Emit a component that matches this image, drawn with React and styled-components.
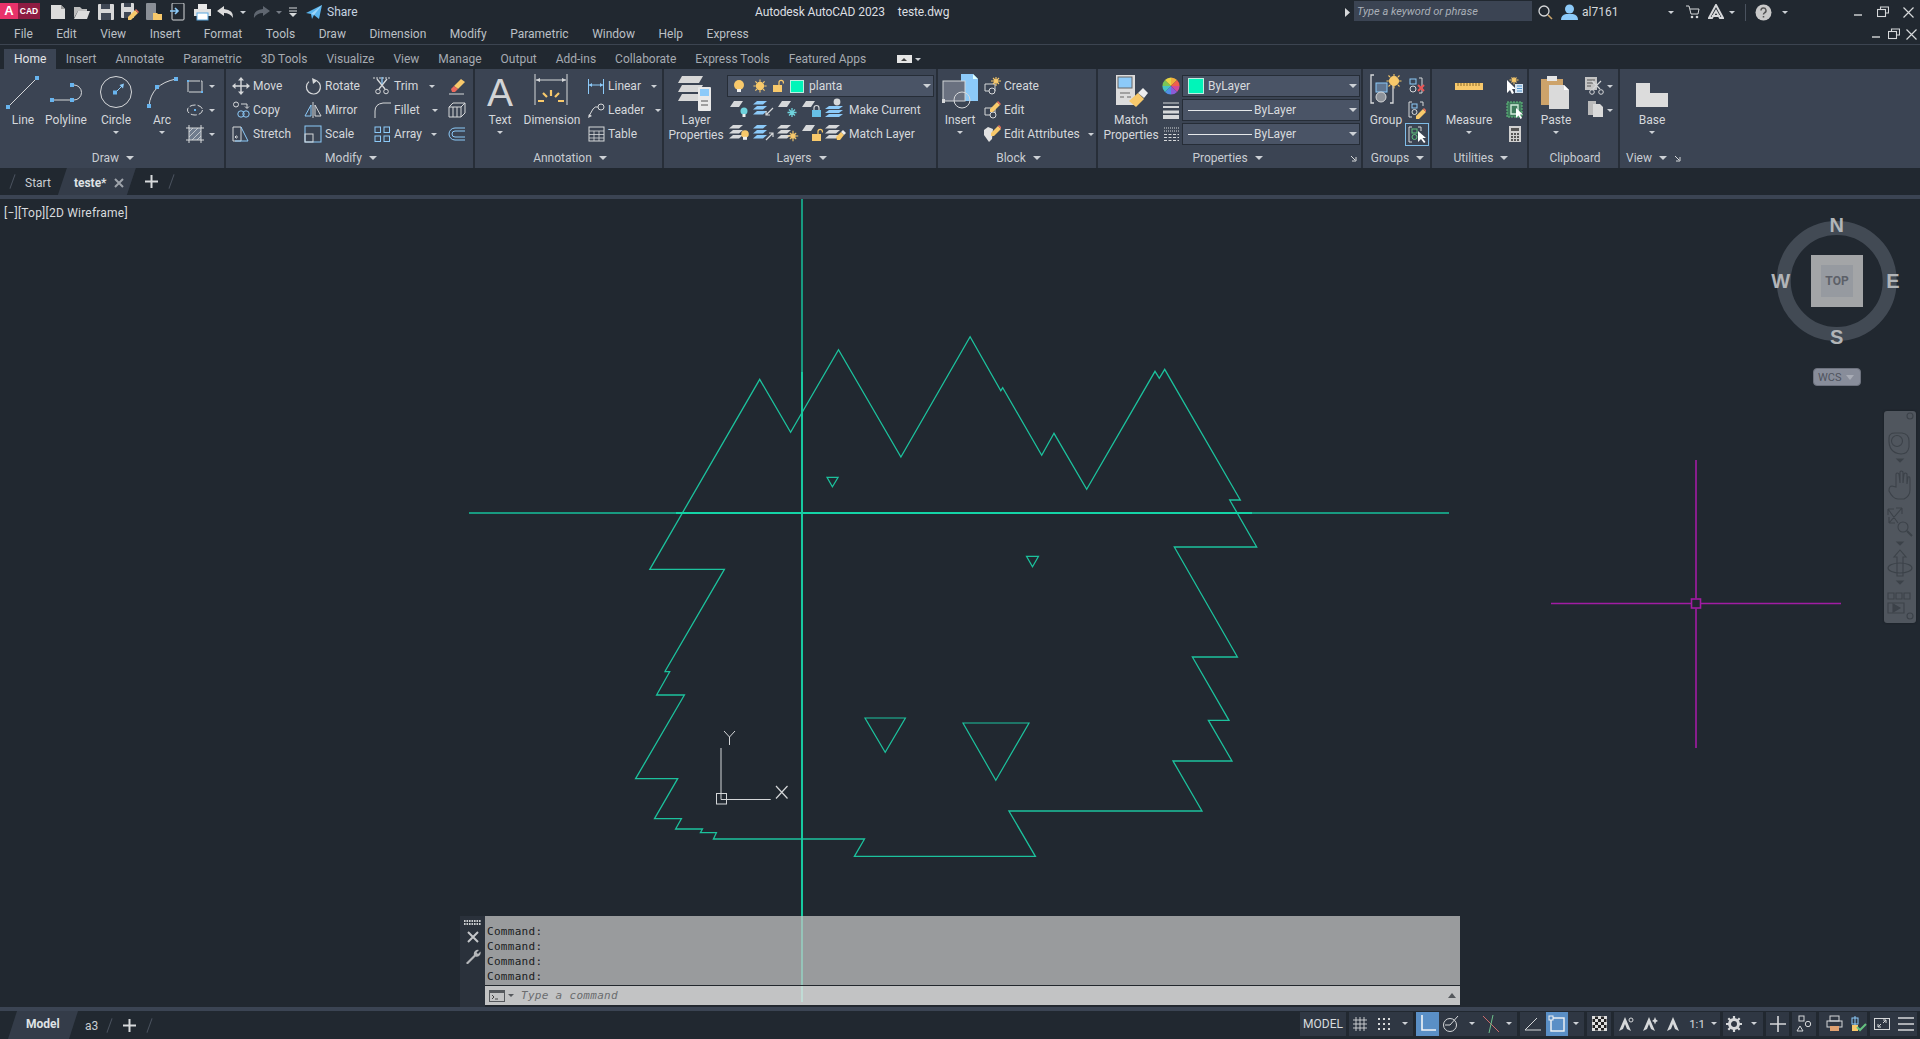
import React from 'react';
import styled, { createGlobalStyle } from 'styled-components';

const Global = createGlobalStyle`
  html, body { margin: 0; padding: 0; height: 100%; background: #212830; overflow: hidden; }
  #root { height: 100%; }
  * { box-sizing: border-box; }
`;
const BG = '#212830', PANEL = '#3b4453', GR = '#d6d8da', BL = '#8ccaf9', YE = '#f8c96b', LN = '#1cc29d';

const Page = styled.div`
  width: 1920px; height: 1039px; display: flex; flex-direction: column; background: ${BG};
  font-family: Roboto, "Open Sans", sans-serif; font-size: 12px; color: #d5d8dc; overflow: hidden;
`;
const Svg = styled.svg`display: block; flex: none;`;
const S = ({ w, h = w, children }) => <Svg width={w} height={h} viewBox={`0 0 ${w} ${h}`} fill="none">{children}</Svg>;
const Pt = ({ x, y, s = 4, c = '#68b4ee' }) => <rect x={x - s / 2} y={y - s / 2} width={s} height={s} fill={c} />;

const Caret = styled.span`
  display: inline-block; flex: none; width: 0; height: 0;
  margin-left: ${p => p.$ml || 0}px;
  border-left: ${p => p.$s || 3}px solid transparent; border-right: ${p => p.$s || 3}px solid transparent;
  border-top: ${p => (p.$s || 3)}px solid ${p => p.$c || '#cdd1d6'};
`;

/* ---------- title bar ---------- */
const TitleBar = styled.div`height: 24px; flex: none; display: flex; align-items: center;`;
const LeftBlock = styled.div`width: 755px; flex: none; display: flex; align-items: center; height: 100%;`;
const Logo = styled.div`width: 40px; height: 16px; margin-top: -2px; display: flex; flex: none; font-family: "Liberation Sans", sans-serif; font-weight: 700; color: #fff;`;
const LogoA = styled.span`width: 18px; background: #e8326a; font-size: 13px; line-height: 16px; text-align: center;`;
const LogoCad = styled.span`width: 22px; background: #8e1c42; font-size: 8.5px; line-height: 16px; text-align: center;`;
const Slot = styled.div`
  width: ${p => p.$w}px; margin-left: ${p => p.$ml || 0}px; height: 100%; flex: none;
  display: flex; align-items: center; justify-content: center;
`;
const ShareText = styled.span`margin-left: 1px; color: #c6d4e2; font-size: 12px;`;
const TitleText = styled.span`color: #dcdfe2; font-size: 12px; letter-spacing: -.1px; margin-right: ${p => p.$mr || 0}px;`;
const RightBlock = styled.div`margin-left: auto; display: flex; align-items: center; height: 100%; padding-right: 2px;`;
const SearchBox = styled.div`
  width: 178px; height: 20px; margin-top: -2px; background: #3b4453; color: #aab0b8; font-size: 11px; font-style: italic;
  padding: 0 3px; line-height: 21px; flex: none;
`;
const UserName = styled.span`width: 84px; margin-left: 2px; font-size: 12px; color: #d5d8dc; flex: none;`;
const VSep = styled.span`width: 1px; height: 17px; background: #4a525e; margin-left: 9px; flex: none;`;

/* ---------- menus ---------- */
const MenuBar = styled.div`height: 21px; flex: none; display: flex; align-items: center; padding-left: 14px; gap: 23.5px; border-bottom: 1px solid #3c4450;`;
const MenuItem = styled.span`color: #bcc0c6; font-size: 12px;`;
const MenuWin = styled.div`margin-left: auto; display: flex; height: 100%; padding-right: 1px;`;
const TabRow = styled.div`height: 24px; flex: none; display: flex; align-items: flex-end; padding-left: 4px;`;
const Tab = styled.div`
  height: 20px; padding: 0 ${p => (p.$on ? 10 : 9.5)}px; line-height: 20px; font-size: 12px; flex: none;
  background: ${p => (p.$on ? PANEL : 'transparent')}; color: ${p => (p.$on ? '#e4e6e8' : '#a6abb2')};
`;
const TabToggle = styled.div`margin-left: 21px; height: 20px; display: flex; align-items: center; gap: 3px;`;
const ToggleBox = styled.span`
  width: 15px; height: 8px; background: #e6e6e6; display: flex; align-items: center; justify-content: center;
`;

/* ---------- ribbon ---------- */
const Ribbon = styled.div`height: 99px; flex: none; display: flex; background: ${PANEL}; padding-left: 1px; padding-right: 1px;`;
const Panel = styled.div`
  width: ${p => (p.$w ? `${p.$w}px` : 'auto')}; flex: ${p => (p.$w ? 'none' : '1')};
  display: flex; flex-direction: column; border-right: ${p => (p.$w ? '2px solid #272e38' : '0')};
`;
const PanelBody = styled.div`height: 80px; padding-top: 5px; padding-left: ${p => p.$pad || 0}px; display: flex; flex: none;`;
const PanelFoot = styled.div`
  height: 18px; display: grid; grid-template-columns: 1fr auto 1fr; align-items: center; color: #c9cdd2; font-size: 12px; padding-right: 4px;
`;
const FootLabel = styled.div`grid-column: 2; display: flex; align-items: center; gap: 7px; white-space: nowrap; margin-left: ${p => p.$ml || 0}px;`;
const ViewFoot = styled.div`height: 18px; display: flex; align-items: center; gap: 7px; padding-left: 6px; color: #c9cdd2;`;
const Launch = styled.span`grid-column: 3; justify-self: end; display: flex;`;
const LargeTool = styled.div`
  width: ${p => p.$w}px; flex: none; display: flex; flex-direction: column; align-items: center;
`;
const LargeIcon = styled.div`height: 39px; width: 100%; display: flex; justify-content: center; flex: none;`;
const LargeLabel = styled.div`line-height: 15px; text-align: center; white-space: nowrap; color: #d5d8dc; font-size: 12px;`;
const LargeCaret = styled.div`height: 9px; display: flex; align-items: center; justify-content: center;`;
const BigA = styled.span`font-family: "Liberation Sans", sans-serif; font-size: 39px; line-height: 38px; height: 38px; color: #d2d4d6; font-weight: 400;`;
const Col = styled.div`
  width: ${p => p.$w}px; margin-left: ${p => p.$ml || 0}px; flex: none; display: flex; flex-direction: column;
`;
const Row = styled.div`
  height: 24px; display: flex; align-items: center; gap: ${p => (p.$gap ?? 3)}px; white-space: nowrap; flex: none; color: #d5d8dc;
  justify-content: ${p => (p.$center ? 'center' : 'flex-start')}; padding-left: ${p => p.$pad || 0}px;
`;
const HiBox = styled.div`
  width: 24px; height: 23px; margin-top: 1px; border: 1px solid #7fbde8; display: flex; align-items: center; justify-content: center; flex: none;
`;
const IconCell = styled.div`display: flex; width: 24px; justify-content: center; flex: none;`;
const LayerRow = styled.div`height: 24px; display: flex; align-items: center; white-space: nowrap; flex: none; padding-left: 2px; color: #d5d8dc;`;
const LayerText = styled.span`margin-left: 1px;`;
const Combo = styled.div`
  width: ${p => p.$w}px; height: 22px; margin-left: ${p => p.$ml || 0}px; background: #4a5466; border: 1px solid #262d37; display: flex; align-items: center;
  padding-left: ${p => p.$pad || 5}px; padding-right: 2px; gap: 3px; color: #d8dbde; flex: none;
`;
const ComboRow = styled.div`height: 24px; display: flex; align-items: center; flex: none;`;
const ComboText = styled.span`margin-left: ${p => p.$ml || 0}px;`;
const Swatch = styled.span`
  width: ${p => p.$w}px; height: ${p => p.$h}px; background: #00f5b9; border: 1px solid #bdeee0; flex: none;
`;
const Rule = styled.span`width: 64px; height: 1px; background: #e6e8ea; flex: none;`;
const Push = styled.span`margin-left: auto; display: flex;`;

/* ---------- file tabs ---------- */
const FileTabs = styled.div`height: 27px; flex: none; display: flex; align-items: center;`;
const Slash = styled.span`width: 1px; height: 15px; background: #4b535f; transform: rotate(20deg); flex: none; margin-left: ${p => p.$ml || 0}px;`;
const PlainTab = styled.span`margin-left: ${p => p.$ml}px; color: #c9cdd2; font-size: 12px; flex: none; padding-top: 2px;`;
const ActiveTab = styled.div`
  margin-left: ${p => p.$ml}px; width: ${p => p.$w}px; height: 100%; background: #343c49; flex: none; display: flex; align-items: center;
  padding-left: ${p => p.$pad}px; gap: 7px; font-weight: 700; color: #dfe2e5; font-size: 12px; padding-top: 2px;
  clip-path: polygon(9px 0, 100% 0, calc(100% - 9px) 100%, 0 100%);
`;
const Strip = styled.div`height: 4px; flex: none; background: ${PANEL};`;

/* ---------- viewport ---------- */
const Viewport = styled.div`flex: 1; position: relative; overflow: hidden; background: ${BG};`;
const ViewLabel = styled.div`position: absolute; left: 4px; top: 5px; font-size: 12px; letter-spacing: .22px; line-height: 18px; color: #d9dbde; z-index: 2;`;
const Canvas = styled.svg`position: absolute; left: 0; top: 0; display: block;`;
const Cube = styled.div`position: absolute; left: 1770px; top: 16px; width: 135px; height: 135px;`;
const CubeFace = styled.div`
  position: absolute; left: 41px; top: 40px; width: 52px; height: 52px; background: #a3a5a7; display: flex; align-items: center; justify-content: center;
`;
const CubeInner = styled.div`
  width: 32px; height: 32px; background: #969aa0; color: #5c6068; font-weight: 700; font-size: 12px; text-align: center; line-height: 32px;
`;
const Dir = styled.span`
  position: absolute; left: ${p => p.$x}px; top: ${p => p.$y}px; transform: translate(-50%,-50%); color: #b2b5b8;
  font: 700 20px/1 "Liberation Sans", sans-serif;
`;
const WcsBtn = styled.div`
  position: absolute; left: 1813px; top: 169px; width: 48px; height: 18px; border-radius: 4px; background: #888d9a; border: 1px solid #6d727e;
  color: #4f535e; font-size: 11px; display: flex; align-items: center; padding-left: 4px; gap: 5px;
`;
const NavBar = styled.div`position: absolute; left: 1884px; top: 212px; width: 32px; height: 212px; background: #50565e; border-radius: 3px; box-shadow: 0 0 2px #161b20;`;

const CmdWrap = styled.div`position: absolute; left: 460px; top: 717px; width: 1000px; height: 91px; display: flex;`;
const CmdHandle = styled.div`
  width: 25px; flex: none; background: #2a313b; display: flex; flex-direction: column; align-items: center; padding-top: 4px; gap: 5px;
`;
const CmdMain = styled.div`flex: 1; display: flex; flex-direction: column;`;
const CmdHistory = styled.div`
  height: 70px; background: rgba(194,194,194,.75); padding: 8px 0 0 2px; color: #1a1c1e; flex: none;
  font: 11px/15px "DejaVu Sans Mono", monospace; letter-spacing: .3px; border-bottom: 1px solid #22272d; overflow: hidden;
`;
const CmdInput = styled.div`
  height: 20px; background: rgba(222,222,222,.85); display: flex; align-items: center; padding: 0 4px; gap: 3px; flex: none;
  color: #6a6c6e; font: italic 11px "DejaVu Sans Mono", monospace; letter-spacing: .3px; border-bottom: 1px solid #22272d;
`;
const CmdText = styled.span`margin-left: 4px;`;

/* ---------- status bar ---------- */
const StatusBar = styled.div`height: 28px; flex: none; display: flex; align-items: center;`;
const ModelTab = styled.div`
  margin-left: 8px; width: 70px; height: 28px; background: #343c49; clip-path: polygon(9px 0,100% 0,calc(100% - 9px) 100%,0 100%);
  font-weight: 700; color: #dfe2e5; padding-left: 18px; line-height: 27px; flex: none; font-size: 12px;
`;
const BarTools = styled.div`margin-left: auto; display: flex; gap: 3px; padding: 0 3px 3px 0;`;
const Seg = styled.div`
  width: ${p => p.$w}px; height: 24px; background: #2f3743; display: flex; align-items: center; flex: none;
`;
const Btn = styled.div`
  width: ${p => p.$w}px; height: 100%; flex: none; display: flex; align-items: center; justify-content: center;
  background: ${p => (p.$on ? '#5a8fc6' : 'transparent')}; color: #d8dbde; font-size: ${p => p.$fs || 12}px;
`;

/* ---------- icons ---------- */
const Sheet = ({ y, c = GR, x = 0, w = 17, h = 4 }) => <path d={`M${x + 4} ${y}h${w}l-4 ${h}h-${w}z`} fill={c} />;
const Bulb = ({ x, y, c = YE, r = 4 }) => <g><circle cx={x} cy={y} r={r} fill={c} /><rect x={x - 2} y={y + r - 1} width={4} height={3} fill="#eee" /></g>;
const Lock = ({ x, y, c = '#67c0e6', open }) => <g><rect x={x} y={y + 4} width={9} height={7} fill={c} /><path d={open ? `M${x + 6} ${y + 4}V${y + 1.5}a2.2 2.2 0 0 1 4.4 0v1` : `M${x + 2} ${y + 4}V${y + 2}a2.5 2.5 0 0 1 5 0v2`} stroke={open ? c : GR} strokeWidth="1.2" /></g>;
const OneSheet = ({ children }) => <S w={22}><Sheet y={2} w={9} h={6} x={1} />{children}</S>;
const Stack = ({ c = GR, children }) => <S w={22}>{[2, 7, 12].map(y => <Sheet key={y} y={y} w={10} h={3.5} x={0} c={c} />)}{children}</S>;
const Sun = ({ x, y, r = 4, c = YE }) => <g stroke={c} strokeWidth="1.1"><path d={`M${x} ${y - r - 3}v2.4M${x} ${y + r + .6}v2.4M${x - r - 3} ${y}h2.4M${x + r + .6} ${y}h2.4M${x - r - 1} ${y - r - 1}l1.6 1.6M${x + r - .6} ${y + r - .6}l1.6 1.6M${x + r + 1} ${y - r - 1}l-1.6 1.6M${x - r + .6} ${y + r - .6}l-1.6 1.6`} /><circle cx={x} cy={y} r={r} fill={c} /></g>;
const Pencil = ({ x = 0, y = 0 }) => <g transform={`translate(${x} ${y})`}><path d="M0 7L7 0l3 3-7 7H0z" fill={YE} /><path d="M7 0l3 3 1-1-3-3z" fill="#e86a5a" /></g>;

const Icons = {
  line: <S w={38} h={36}><path d="M4 33L33 4" stroke={GR} /><Pt x={4} y={33} /><Pt x={33} y={4} /></S>,
  poly: <S w={46} h={36}><path d="M9 26h20h2a7.5 7.5 0 0 0 0-15h-2" stroke={GR} /><Pt x={9} y={26} /><Pt x={29} y={26} /><Pt x={29} y={11} /></S>,
  circle: <S w={54} h={36}><circle cx={27} cy={18} r={15.5} stroke={GR} /><path d="M27 18l7-7" stroke={BL} /><path d="M35 9.5l-1 5-3.5-3.5z" fill={BL} /><Pt x={26} y={18.5} /></S>,
  arc: <S w={38} h={36}><path d="M6 32Q8 10 33 5" stroke={GR} /><Pt x={6} y={32} /><Pt x={14} y={13} /><Pt x={33} y={5} /></S>,
  rect: <S w={18}><path d="M2 4h14v11H2z" stroke={GR} strokeDasharray="12 1" /><Pt x={2} y={4} s={2} /><Pt x={16} y={15} s={2} /></S>,
  ellipse: <S w={18}><ellipse cx={9} cy={9} rx={7.5} ry={5} stroke={GR} strokeDasharray="6 2" /><Pt x={9} y={9} s={2} /></S>,
  hatch: <S w={18}><rect x={3} y={3} width={12} height={12} fill="#6f7c8e" stroke={GR} /><path d="M3 12l9-9M6 15l9-9M3 7l4-4M11 15l4-4" stroke={GR} strokeWidth=".8" /><path d="M0 3h3M15 3h3M0 15h3M15 15h3M3 0v3M15 0v3M3 15v3M15 15v3" stroke={GR} /></S>,
  move: <S w={18}><path d="M9 2v14M2 9h14" stroke={GR} strokeWidth="1.4" /><path d="M9 0l3 3.5H6zM9 18l3-3.5H6zM0 9l3.5-3v6zM18 9l-3.5-3v6z" fill={GR} /></S>,
  copy: <S w={18}><circle cx={4} cy={3.5} r={2.5} stroke={GR} /><circle cx={9} cy={13} r={3.2} stroke={BL} /><circle cx={14} cy={13} r={3.2} stroke={BL} /><path d="M9 3h6v4m-2-1.5l2 2 2-2" stroke={GR} /></S>,
  stretch: <S w={18}><path d="M1 2h8v14H1z" stroke={GR} /><path d="M9 2l7 14H3" stroke={BL} /><path d="M6 12h-3m1.5-1.5L3 12l1.5 1.5" stroke={GR} /></S>,
  rotate: <S w={18}><path d="M13 4A7 7 0 1 1 5 4.6" stroke={GR} strokeWidth="1.2" /><path d="M8 1l5.5 2.5L9 7z" fill={GR} /></S>,
  mirror: <S w={18}><path d="M9 1v16" stroke={GR} /><path d="M7 4L1 15h6z" stroke={BL} /><path d="M11 4l6 11h-6z" stroke={GR} /></S>,
  scale: <S w={18}><rect x={1} y={1} width={16} height={16} stroke={BL} /><rect x={1} y={9} width={8} height={8} stroke={GR} /></S>,
  trim: <S w={18}><path d="M0 1h18" stroke={GR} strokeDasharray="2 1" /><path d="M4 2l8 10M14 2L6 12" stroke={GR} strokeWidth="1.3" /><circle cx={5} cy={14.5} r={2.3} stroke={GR} /><circle cx={13} cy={14.5} r={2.3} stroke={GR} /><path d="M9 0v7" stroke={BL} strokeWidth="1.3" /></S>,
  fillet: <S w={18}><path d="M2 17V10Q2 3 10 2h8" stroke={GR} /></S>,
  array: <S w={18}>{[[2, 2], [11, 2], [2, 11], [11, 11]].map(([x, y]) => <rect key={x + '' + y} x={x} y={y} width={5.5} height={5.5} stroke={BL} />)}</S>,
  erase: <S w={18}><path d="M6 9l7-7 4 3-7 7z" fill={YE} /><path d="M3 12l3-3 4 3-3 3H4z" fill="#ec6a5c" /><path d="M1 17h15" stroke={GR} /></S>,
  box3d: <S w={18}><path d="M1 6h12v10H1zM1 6l4-4h12v10l-4 4M13 6l4-4M5 6v10M9 6v10" stroke={GR} /></S>,
  offset: <S w={18}><path d="M17 3H7a6 6 0 0 0 0 12h10M17 6H7a3 3 0 0 0 0 6h10" stroke={BL} /></S>,
  dim: <S w={36} h={36}><path d="M1 0v31M33 0v31" stroke={GR} /><path d="M2 6h30" stroke={GR} /><path d="M2 6l4-2v4zM32 6l-4-2v4z" fill={GR} /><path d="M17 16v6M9 19l4 4M25 19l-4 4M4 27h6M24 27h6" stroke={YE} strokeWidth="2.2" /></S>,
  linear: <S w={18}><path d="M1.5 2v15M16.5 2v15M2 8h14" stroke={BL} /><path d="M2 8l3-2v4zM16 8l-3-2v4z" fill={BL} /></S>,
  leader: <S w={18}><path d="M2 15l4-7q2-3 5-2" stroke={GR} /><circle cx={14} cy={6} r={3} stroke={GR} /><path d="M1 17l1-4 3 2z" fill={GR} /></S>,
  table: <S w={18}><rect x={2} y={2} width={15} height={14} stroke={GR} /><path d="M2 6h15M2 9.5h15M2 13h15M7 6v10M12 6v10" stroke={GR} strokeWidth=".8" /></S>,
  layerProps: <S w={36} h={38}>{[2, 11, 20].map(y => <Sheet key={y} y={y} w={21} h={7} x={0} c="#d8d8d8" />)}<rect x={20} y={13} width={13} height={24} rx={1} fill="#e9e9e9" /><rect x={22} y={15} width={9} height={7} fill={BL} /><path d="M23 27h7M23 31h7" stroke="#555" /></S>,
  l1: <OneSheet><circle cx={15} cy={12} r={3.5} fill="#6fd2dc" /><rect x={13.5} y={15} width={3} height={3} fill="#eee" /></OneSheet>,
  l2: <Stack c={BL}><path d="M20 9l-7 7m0-4v4h4" stroke={GR} strokeWidth="1.2" /></Stack>,
  l3: <OneSheet><path d="M15 9v9M10.500 13.500h9M12 10.500l6 6M18 10.500l-6 6" stroke="#6fd2dc" strokeWidth="1.3" /></OneSheet>,
  l4: <OneSheet><Lock x={11} y={7} /></OneSheet>,
  l5: <S w={24}><circle cx={13} cy={4} r={3.4} fill={GR} />{[8, 12, 16].map(y => <Sheet key={y} y={y} w={14} h={3} x={1} c={BL} />)}</S>,
  l6: <Stack><Bulb x={16} y={11} r={3.8} /></Stack>,
  l7: <Stack c={BL}><path d="M13 17l7-7m0 4v-4h-4" stroke={GR} strokeWidth="1.2" /></Stack>,
  l8: <Stack><Sun x={16} y={13} r={2.2} /></Stack>,
  l9: <OneSheet><Lock x={11} y={7} c={YE} open /></OneSheet>,
  l10: <S w={24}>{[3, 8, 13].map(y => <Sheet key={y} y={y} w={11} h={3.5} x={1} c={GR} />)}<path d="M12 15l5-5 3 3-4 5h-3z" fill={YE} /><path d="M17 10l2-2 3 3-2 2z" fill="#eee" /></S>,
  insert: <S w={36} h={38}><path d="M19 0h12l5 5v22H19z" fill={BL} /><path d="M31 0l5 5h-5z" fill="#dff" /><rect x={1} y={7} width={22} height={20} fill="#6a7180" stroke="#d0d3d6" /><circle cx={20} cy={26} r={8} stroke={GR} /><Pt x={1} y={27} c={GR} /></S>,
  create: <S w={18}><path d="M2 7h10v7H2z" stroke={GR} /><circle cx={9} cy={14} r={3} fill={PANEL} stroke={GR} /><Sun x={13} y={4} r={2} /></S>,
  edit: <S w={18}><path d="M2 7h10v7H2z" stroke={GR} /><circle cx={10} cy={14} r={3} fill={PANEL} stroke={GR} /><Pencil x={7} y={1} /></S>,
  editAttr: <S w={18}><path d="M1 5l4-3 5 2-1 10-3 3-5-7z" fill="#e2e2e2" /><Pencil x={8} y={1} /></S>,
  match: <S w={36} h={38}><rect x={3} y={1} width={19} height={30} fill="#dcdcdc" /><rect x={5} y={3} width={14} height={11} fill={BL} stroke="#666" /><path d="M7 19h10M7 23h4M14 23h4" stroke="#666" /><path d="M16 27l9-8 6 6-8 8z" fill={YE} /><path d="M25 19l5-5 5 5-4 5z" fill="#eee" /></S>,
  wheel: <S w={18}>{['#f0b03c', '#ef5f4d', '#d24a9a', '#8a5cd8', '#4f90e6', '#47c3c0', '#7bc655', '#e7d645'].map((c, i) => <path key={c} d={`M9 9L${9 + 8.6 * Math.cos(i * Math.PI / 4 - 1.57)} ${9 + 8.6 * Math.sin(i * Math.PI / 4 - 1.57)}A8.6 8.6 0 0 1 ${9 + 8.6 * Math.cos((i + 1) * Math.PI / 4 - 1.57)} ${9 + 8.6 * Math.sin((i + 1) * Math.PI / 4 - 1.57)}Z`} fill={c} />)}</S>,
  weight: <S w={18}><path d="M1 2h16" stroke={GR} /><path d="M1 6h16" stroke={GR} strokeWidth="2" /><path d="M1 11h16" stroke={GR} strokeWidth="3" /><path d="M1 16h16" stroke={GR} strokeWidth="4" /></S>,
  ltype: <S w={18}><path d="M2 3h15" stroke={GR} strokeDasharray="1 1" /><path d="M2 6h15" stroke={GR} strokeDasharray="1 1" /><path d="M2 9.5h15M2 12.5h15M2 15.5h15" stroke={GR} strokeDasharray="3 1.5" /></S>,
  group: <S w={34} h={38}><path d="M5 1H2v28h3M24 9v20h-3" stroke={GR} strokeWidth="1.3" /><rect x={7} y={9} width={11} height={9} stroke={BL} fill="#5f7590" /><circle cx={12} cy={23} r={5} fill="#8e939a" stroke={GR} /><Sun x={25} y={7} r={4.5} /></S>,
  ungroup: <S w={18}><rect x={2} y={2} width={6} height={5} stroke={BL} /><circle cx={5} cy={12} r={3} stroke={GR} /><path d="M11 1h3v15h-3" stroke={GR} /><path d="M10 8l6 6m0-6l-6 6" stroke="#e75555" strokeWidth="2" /></S>,
  gedit: <S w={18}><path d="M4 1H1v15h3M12 1h3v4" stroke={GR} /><rect x={4} y={3} width={5} height={4} stroke={BL} /><circle cx={6.5} cy={11} r={2.5} stroke={GR} /><Pencil x={8} y={8} /></S>,
  gsel: <S w={18}><path d="M4 1H1v15h3M10 1h3v4" stroke={GR} /><rect x={4} y={3} width={5} height={4} stroke="#62c27f" /><circle cx={6.5} cy={11} r={2.5} stroke="#62c27f" /><path d="M10 5v11l3-3 3 4 1.5-1-3-4h3.5z" fill="#fff" /></S>,
  measure: <S w={36} h={38}><rect x={4} y={9} width={28} height={7} fill={YE} /><path d="M7 9v3M10 9v3M13 9v3M16 9v3M19 9v3M22 9v3M25 9v3M28 9v3" stroke="#8a6a2c" /></S>,
  quick: <S w={18}><path d="M1 3v13l3-3 2 4 2-1-2-4h4z" fill="#fff" /><rect x={9} y={7} width={8} height={9} fill="#d8e6f2" /><path d="M11 9h5M11 11.5h5M11 14h5" stroke="#4e93ce" /><Sun x={8} y={3} r={1.5} /></S>,
  selSim: <S w={18}><rect x={1} y={1} width={15} height={15} fill="#3f7a5c" stroke="#62c27f" strokeDasharray="2 1" /><path d="M5 4h7v9H5z" stroke="#cfe9d7" strokeWidth="1.4" /><path d="M10 7v10l2.5-2.5 2 3.5 1.5-1-2-3.5H17z" fill="#fff" /></S>,
  calc: <S w={18}><rect x={3} y={1} width={12} height={16} fill="#d0d0d0" /><rect x={5} y={3} width={8} height={3} fill="#555" /><path d="M5 8h2v2H5zM8 8h2v2H8zM11 8h2v2h-2zM5 11h2v2H5zM8 11h2v2H8zM11 11h2v2h-2zM5 14h2v2H5zM8 14h2v2H8zM11 14h2v2h-2z" fill="#555" /></S>,
  paste: <S w={34} h={38}><rect x={2} y={5} width={22} height={26} fill="#cda36a" /><rect x={8} y={2} width={10} height={5} fill="#e6e6e6" /><path d="M10 11h15l5 5v19H10z" fill="#dadada" /><path d="M25 11l5 5h-5z" fill="#fff" /></S>,
  cut: <S w={22}><rect x={2} y={2} width={12} height={13} fill="#c4c4c4" /><path d="M4 5h8M4 8h6M4 11h4" stroke="#555" /><path d="M9 6l8 8M18 6l-8 8" stroke={GR} strokeWidth="1.2" /><circle cx={9} cy={17} r={2.3} stroke={GR} /><circle cx={18} cy={17} r={2.3} stroke={GR} /></S>,
  copyc: <S w={22}><path d="M5 2h8v4h-3v10H5z" fill="#bbb" /><path d="M10 5h7l3 3v10H10z" fill="#dadada" /></S>,
  base: <S w={36} h={38}><path d="M0 9h14v10h18v14H0z" fill="#dcdcdc" transform="translate(2 0)" /></S>,
};

const Share = <S w={18}><path d="M1 10L17 2l-3 14-5-4-2 4-1-5z" fill="#5bb5ee" /><path d="M6 11l11-9-8 10z" fill="#9cd6fa" /></S>;
const Q = {
  nw: <S w={16} h={16}><path d="M1 1h10l4 4v10H1z" fill="#dcdcdc" /><path d="M11 1l4 4h-4z" fill="#9a9a9a" /></S>,
  op: <S w={18} h={16}><path d="M1 3h6l2 2h5v2H5L1 14z" fill="#bdbdbd" /><path d="M5 7h12l-3 8H1z" fill="#dcdcdc" /></S>,
  sv: <S w={16}><rect x={0} y={0} width={16} height={16} rx={1} fill="#d8d8d8" /><rect x={3} y={0} width={9} height={5} fill="#404855" /><rect x={3} y={9} width={10} height={7} fill="#404855" /></S>,
  sa: <S w={18}><rect x={0} y={0} width={13} height={15} rx={1} fill="#d8d8d8" /><rect x={3} y={0} width={7} height={4} fill="#404855" /><rect x={3} y={9} width={7} height={6} fill="#404855" /><Pencil x={7} y={7} /></S>,
  web: <S w={18}><rect x={1} y={0} width={10} height={17} rx={1} fill="#8a8f96" /><path d="M8 10h4l1 1h4v6H8z" fill={YE} /></S>,
  up: <S w={18}><rect x={3} y={0} width={12} height={17} rx={1} stroke={GR} /><path d="M1 8h7M6 5l3 3-3 3" stroke={BL} strokeWidth="1.6" /></S>,
  pr: <S w={17}><rect x={4} y={0} width={9} height={5} fill="#e8e8e8" /><rect x={0} y={5} width={17} height={7} fill="#e2e2e2" /><rect x={3} y={9} width={11} height={7} fill="#fff" stroke="#5aa8e0" /></S>,
  un: <S w={18}><path d="M7 3L0 8l7 5V10q6 0 9 5 1-8-9-9z" fill="#dcdcdc" /></S>,
  re: <S w={18}><path d="M11 3l7 5-7 5V10q-6 0-9 5-1-8 9-9z" fill="#5f6670" /></S>,
  dd: <S w={10}><path d="M1 1h8M1 4h8" stroke={GR} /><path d="M1 6h8L5 10z" fill={GR} /></S>,
  mag: <S w={16}><circle cx={7} cy={7} r={5} stroke={GR} strokeWidth="1.3" /><path d="M11 11l4 4" stroke="#c9a36a" strokeWidth="1.6" /></S>,
  user: <S w={17}><circle cx={8.5} cy={5} r={4.5} fill={BL} /><path d="M0 16q0-5 5-6h7q5 1 5 6z" fill={BL} /></S>,
  cart: <S w={14}><path d="M0 1h3l2 8h7l1-5H4" stroke={GR} /><circle cx={6} cy={12} r={1.3} fill={GR} /><circle cx={11} cy={12} r={1.3} fill={GR} /></S>,
  a360: <S w={16}><path d="M8 1L1 14h3l4-7 4 7h3z" stroke={GR} strokeWidth="2" /><path d="M4 12h8" stroke={GR} strokeWidth="2" /></S>,
  help: <Svg width={17} height={17} viewBox="0 0 17 17"><circle cx={8.5} cy={8.5} r={8} fill="#c9c9c9" /><path d="M6 6.5a2.5 2.5 0 1 1 3.5 2.3q-1 .5-1 1.7M8.5 12v1.5" stroke="#555" strokeWidth="1.5" fill="none" /></Svg>,
  min: <S w={8}><path d="M0 7h8" stroke={GR} strokeWidth="1.4" /></S>,
  rest: <S w={12}><path d="M3.5 3V1h8v6h-3" stroke={GR} strokeWidth="1.1" /><rect x={.5} y={3.5} width={8} height={7} stroke={GR} strokeWidth="1.1" /></S>,
  cls: <S w={11}><path d="M.5.5l10 10m0-10l-10 10" stroke={GR} strokeWidth="1.2" /></S>,
};

const St = {
  grid: <S w={14}><path d="M3 0v14M7 0v14M11 0v14M0 3h14M0 7h14M0 11h14" stroke={GR} strokeWidth=".9" /></S>,
  dots: <S w={14}>{[2, 7, 12].flatMap(x => [2, 7, 12].map(y => <rect key={x + '-' + y} x={x - 1} y={y - 1} width={2} height={2} fill={GR} />))}</S>,
  ortho: <S w={18}><path d="M3 0v15h14" stroke="#f2f4f6" strokeWidth="1.6" /></S>,
  polar: <S w={18}><circle cx={8} cy={10} r={6.5} stroke={GR} /><path d="M8 10L16 1M3 10h5" stroke={GR} /></S>,
  osnap: <S w={18}><path d="M1 1l16 16" stroke="#cf6c6c" /><path d="M11 0L7 18" stroke="#6fc18c" /></S>,
  ang: <S w={18}><path d="M17 15H1L13 3" stroke={GR} /></S>,
  box: <S w={18}><rect x={3} y={3} width={13} height={13} stroke="#f2f4f6" strokeWidth="1.4" /><rect x={1} y={1} width={4} height={4} fill="#5a8fc6" stroke="#f2f4f6" /></S>,
  checker: <S w={15}><rect width={15} height={15} fill="#222" stroke="#ddd" />{[0, 1, 2, 3, 4].flatMap(i => [0, 1, 2, 3, 4].map(j => (i + j) % 2 === 0 ? <rect key={i + '_' + j} x={i * 3} y={j * 3} width={3} height={3} fill="#ddd" /> : null))}</S>,
  ann: <S w={16}><path d="M7 1L1 15l4-2 2-5 2 5 4 2z" fill={GR} /></S>,
  annO: <S w={16}><path d="M7 1L1 15l4-2 2-5 2 5 4 2z" fill={GR} /><circle cx={13} cy={4} r={2} stroke={GR} /></S>,
  annS: <S w={16}><path d="M7 1L1 15l4-2 2-5 2 5 4 2z" fill={GR} /><path d="M13 1l1 2.500L16 5l-2 1-1 2.500-1-2.500-2-1 2-1.500z" fill={GR} /></S>,
  gear: <S w={16}><circle cx={8} cy={8} r={4.5} stroke={GR} strokeWidth="3" /><path d="M8 0v3M8 13v3M0 8h3M13 8h3M2.3 2.3l2 2M11.7 11.7l2 2M13.7 2.3l-2 2M4.3 11.7l-2 2" stroke={GR} strokeWidth="2.2" /></S>,
  plus: <S w={16}><path d="M8 0v16M0 8h16" stroke={GR} strokeWidth="1.6" /></S>,
  shapes: <S w={18}><rect x={4} y={1} width={5} height={5} stroke={GR} /><circle cx={13} cy={9} r={2.7} stroke={GR} /><path d="M5 11l3 5H2z" stroke={GR} /></S>,
  print: <S w={17}><rect x={4} y={1} width={9} height={5} stroke={GR} /><rect x={1} y={6} width={15} height={6} stroke={GR} /><rect x={4} y={11} width={9} height={5} fill="#e0a070" /></S>,
  check: <S w={17}><path d="M5 1v13" stroke={BL} /><rect x={2} y={10} width={6} height={6} fill={YE} /><rect x={2} y={3} width={6} height={6} stroke={BL} /><path d="M7 12l3 3 6-6" stroke="#65c27f" strokeWidth="2" /></S>,
  full: <S w={16}><rect x={.5} y={2.5} width={15} height={11} stroke={GR} /><path d="M4 11l3-3M4 8v3h3M12 4L9 7M12 7V4H9" stroke={GR} /></S>,
  menu: <S w={16}><path d="M0 2h16M0 8h16M0 14h16" stroke={GR} strokeWidth="1.6" /></S>,
};

/* ---------- drawing ---------- */
const OUTLINE = [[649.8,569.3],[759.7,379.3],[790.6,432.3],[838.5,349.7],[900.9,457],[970.1,336.7],[1000.8,390.7],[1002.7,387.7],[1041.7,455.3],[1054,433.3],[1086.7,489.3],[1155,371.3],[1159.3,378.3],[1164.7,369.3],[1240.3,500],[1229.7,500],[1256.7,547],[1174.3,547],[1237.4,657],[1192.4,657],[1229,720.3],[1208.4,720.3],[1232,761],[1173,761],[1202,811],[1008.9,811],[1035.4,856.3],[854.4,856.3],[864.5,839],[713.4,839],[716.4,832.7],[700.4,832.7],[702.5,829],[675.6,829],[681.4,818.7],[654.5,818.7],[677.7,778.7],[635.6,778.7],[684.4,695],[656.6,695],[669.7,671.7],[665,671.7],[665.5,670.5],[724.4,569.3]];
const TRIS = [[[827,477.3],[838.1,477.3],[832.4,486.7]],[[1026.5,556.3],[1038.5,556.3],[1032.5,566.7]],[[865,718],[905.4,718],[885.2,752.3]],[[963,723],[1029,723],[995.8,780.3]]];
const pts = a => a.map(p => p.join(',')).join(' ');

const Drawing = () => (
  <Canvas width={1920} height={808} viewBox="0 199 1920 808" fill="none">
    <polygon points={pts(OUTLINE)} stroke={LN} strokeWidth="1.3" />
    {TRIS.map((t, i) => <polygon key={i} points={pts(t)} stroke={LN} strokeWidth="1.2" />)}
    <path d="M469 513H676M1252 513H1449" stroke="#189a80" strokeWidth="2" />
    <path d="M676 513H1252" stroke="#14d3a6" strokeWidth="2" />
    <path d="M802 199V372" stroke="#179a80" strokeWidth="2" />
    <path d="M802 372V1002" stroke="#17c9a0" strokeWidth="2" />
    <g stroke="#d4d6d8" strokeWidth="1">
      <path d="M721 748V799.5H770.7" />
      <rect x="716.5" y="793.5" width="10" height="10.5" />
      <path d="M724 731l5.500 6 5.500-6M729.500 737V745" />
      <path d="M776 786l11.5 12.5M787.5 786L776 798.500" strokeWidth="1.2" />
    </g>
    <g stroke="#a21ca4" strokeWidth="1.6">
      <path d="M1551 603.500H1691M1701 603.500H1841M1696 460V598.500M1696 608.500V748" />
      <rect x="1691.500" y="599" width="9" height="9" fill="none" />
    </g>
  </Canvas>
);

const NavIcons = () => (
  <Svg width={32} height={212} viewBox="0 0 32 212" fill="none" stroke="#3c4249" strokeWidth="1.1">
    <circle cx={26} cy={5} r={3} />
    <circle cx={26} cy={205} r={3} />
    <path d="M5 27Q5 22 11 22h7q7 1 7 8v6q-1 7-8 7Q4 42 5 27z" /><circle cx={13} cy={30} r={5.500} />
    <path d="M13 48h6l-3 3z" fill="#3c4249" />
    <path d="M5 80q4 8 9 8h6q6-3 6-9V68q0-3-2-2l-1 7V63q-2-2-3 0l-1 9V61q-2-2-3 0v11l-1-9q-2-2-3 0v13L8 75q-3 0-3 5z" />
    <path d="M4 98l10 14M18 97L5 112M4 98h6M4 98v6M18 97h-6M18 97v6M5 112h6M5 112v-6" />
    <circle cx={19} cy={116} r={5} /><path d="M23 120l5 5" strokeWidth="2" />
    <path d="M13 131h6l-3 3z" fill="#3c4249" />
    <path d="M16 139l6 7h-3v19h-6v-19h-3z" />
    <ellipse cx={16} cy={157} rx={12} ry={5} />
    <path d="M13 170h6l-3 3z" fill="#3c4249" />
    <path d="M4 182h6v6H4zM12 182h6v6h-6zM20 182h6v6h-6zM4 192h16v10H4z" />
    <path d="M9 193l7 4-7 4z" fill="#3c4249" />
  </Svg>
);

/* ---------- data-driven bits ---------- */
const MENUS = ['File', 'Edit', 'View', 'Insert', 'Format', 'Tools', 'Draw', 'Dimension', 'Modify', 'Parametric', 'Window', 'Help', 'Express'];
const TABS = ['Home', 'Insert', 'Annotate', 'Parametric', '3D Tools', 'Visualize', 'View', 'Manage', 'Output', 'Add-ins', 'Collaborate', 'Express Tools', 'Featured Apps'];

const Tool = ({ w, icon, label, label2, caret }) => (
  <LargeTool $w={w}>
    <LargeIcon>{icon}</LargeIcon>
    <LargeLabel>{label}</LargeLabel>
    {label2 && <LargeLabel>{label2}</LargeLabel>}
    {caret && <LargeCaret><Caret /></LargeCaret>}
  </LargeTool>
);
const Small = ({ icon, text, drop, dropGap, gap }) => (
  <Row $gap={gap}>
    {icon}
    {text && <span>{text}</span>}
    {drop && <Caret $ml={dropGap} />}
  </Row>
);
const LaunchIcon = () => <S w={7}><path d="M1 1l4 4M2 6h4V2" stroke={GR} /></S>;
const Foot = ({ label, launch, ml = 7 }) => (
  <PanelFoot>
    <FootLabel $ml={ml}>{label}<Caret $s={4} /></FootLabel>
    {launch && <Launch><LaunchIcon /></Launch>}
  </PanelFoot>
);

export default function App() {
  return (
    <Page>
      <Global />
      <TitleBar>
        <LeftBlock>
          <Logo><LogoA>A</LogoA><LogoCad>CAD</LogoCad></Logo>
          <Slot $w={24} $ml={6}>{Q.nw}</Slot>
          <Slot $w={24}>{Q.op}</Slot>
          <Slot $w={24}>{Q.sv}</Slot>
          <Slot $w={24}>{Q.sa}</Slot>
          <Slot $w={24}>{Q.web}</Slot>
          <Slot $w={24}>{Q.up}</Slot>
          <Slot $w={24}>{Q.pr}</Slot>
          <Slot $w={24}>{Q.un}</Slot>
          <Slot $w={10}><Caret /></Slot>
          <Slot $w={26}>{Q.re}</Slot>
          <Slot $w={10}><Caret $c="#767c85" /></Slot>
          <Slot $w={18}>{Q.dd}</Slot>
          <Slot $w={24}>{Share}</Slot>
          <ShareText>Share</ShareText>
        </LeftBlock>
        <TitleText $mr={13}>Autodesk AutoCAD 2023</TitleText>
        <TitleText>teste.dwg</TitleText>
        <RightBlock>
          <Slot $w={13}><Svg width={5} height={9} viewBox="0 0 5 9"><path d="M0 0l5 4.500L0 9z" fill={GR} /></Svg></Slot>
          <SearchBox>Type a keyword or phrase</SearchBox>
          <Slot $w={26}>{Q.mag}</Slot>
          <Slot $w={22}>{Q.user}</Slot>
          <UserName>al7161</UserName>
          <Slot $w={10}><Caret /></Slot>
          <Slot $w={22} $ml={6}>{Q.cart}</Slot>
          <Slot $w={24}>{Q.a360}</Slot>
          <Slot $w={8}><Caret /></Slot>
          <VSep />
          <Slot $w={34}>{Q.help}</Slot>
          <Slot $w={10}><Caret /></Slot>
          <Slot $w={20} $ml={58}>{Q.min}</Slot>
          <Slot $w={30}>{Q.rest}</Slot>
          <Slot $w={20}>{Q.cls}</Slot>
        </RightBlock>
      </TitleBar>

      <MenuBar>
        {MENUS.map(m => <MenuItem key={m}>{m}</MenuItem>)}
        <MenuWin>
          <Slot $w={18}>{Q.min}</Slot>
          <Slot $w={18}>{Q.rest}</Slot>
          <Slot $w={16}>{Q.cls}</Slot>
        </MenuWin>
      </MenuBar>

      <TabRow>
        {TABS.map((t, i) => <Tab key={t} $on={i === 0}>{t}</Tab>)}
        <TabToggle>
          <ToggleBox><Svg width={6} height={3} viewBox="0 0 6 3"><path d="M0 3l3-3 3 3z" fill="#444" /></Svg></ToggleBox>
          <Caret />
        </TabToggle>
      </TabRow>

      <Ribbon>
        <Panel $w={225}>
          <PanelBody $pad={2}>
            <Tool w={40} icon={Icons.line} label="Line" />
            <Tool w={46} icon={Icons.poly} label="Polyline" />
            <Tool w={54} icon={Icons.circle} label="Circle" caret />
            <Tool w={38} icon={Icons.arc} label="Arc" caret />
            <Col $w={40} $ml={5}>
              <Small icon={Icons.rect} drop dropGap={2} />
              <Small icon={Icons.ellipse} drop dropGap={2} />
              <Small icon={Icons.hatch} drop dropGap={2} />
            </Col>
          </PanelBody>
          <Foot label="Draw" ml={5} />
        </Panel>
        <Panel $w={249}>
          <PanelBody $pad={6}>
            <Col $w={72}>
              <Small icon={Icons.move} text="Move" />
              <Small icon={Icons.copy} text="Copy" />
              <Small icon={Icons.stretch} text="Stretch" />
            </Col>
            <Col $w={69}>
              <Small icon={Icons.rotate} text="Rotate" />
              <Small icon={Icons.mirror} text="Mirror" />
              <Small icon={Icons.scale} text="Scale" />
            </Col>
            <Col $w={75}>
              <Small icon={Icons.trim} text="Trim" drop dropGap={8} />
              <Small icon={Icons.fillet} text="Fillet" drop dropGap={9} />
              <Small icon={Icons.array} text="Array" drop dropGap={6} />
            </Col>
            <Col $w={20}>
              <Small icon={Icons.erase} />
              <Small icon={Icons.box3d} />
              <Small icon={Icons.offset} />
            </Col>
          </PanelBody>
          <Foot label="Modify" />
        </Panel>
        <Panel $w={189}>
          <PanelBody $pad={7}>
            <Tool w={36} icon={<BigA>A</BigA>} label="Text" caret />
            <Tool w={68} icon={Icons.dim} label="Dimension" />
            <Col $w={70} $ml={1}>
              <Small icon={Icons.linear} text="Linear" drop dropGap={7} />
              <Small icon={Icons.leader} text="Leader" drop dropGap={7} />
              <Small icon={Icons.table} text="Table" />
            </Col>
          </PanelBody>
          <Foot label="Annotation" />
        </Panel>
        <Panel $w={274}>
          <PanelBody $pad={2}>
            <Tool w={60} icon={Icons.layerProps} label="Layer" label2="Properties" />
            <Col $w={208}>
              <ComboRow>
                <Combo $w={207} $ml={1} $pad={1}>
                  <Slot $w={19}><S w={14}><Bulb x={7} y={6} r={5} /></S></Slot>
                  <Slot $w={17}><S w={16}><Sun x={8} y={8} r={3.6} /></S></Slot>
                  <Slot $w={16}><S w={14}><Lock x={1} y={2} c={YE} open /></S></Slot>
                  <Swatch $w={14} $h={13} />
                  <ComboText $ml={2}>planta</ComboText>
                  <Push><Caret $s={4} /></Push>
                </Combo>
              </ComboRow>
              <LayerRow>
                {[Icons.l1, Icons.l2, Icons.l3, Icons.l4, Icons.l5].map((ic, i) => <IconCell key={i}>{ic}</IconCell>)}
                <LayerText>Make Current</LayerText>
              </LayerRow>
              <LayerRow>
                {[Icons.l6, Icons.l7, Icons.l8, Icons.l9, Icons.l10].map((ic, i) => <IconCell key={i}>{ic}</IconCell>)}
                <LayerText>Match Layer</LayerText>
              </LayerRow>
            </Col>
          </PanelBody>
          <Foot label="Layers" />
        </Panel>
        <Panel $w={160}>
          <PanelBody $pad={4}>
            <Tool w={36} icon={Icons.insert} label="Insert" caret />
            <Col $w={110} $ml={5}>
              <Small icon={Icons.create} text="Create" />
              <Small icon={Icons.edit} text="Edit" />
              <Small icon={Icons.editAttr} text="Edit Attributes" drop dropGap={5} />
            </Col>
          </PanelBody>
          <Foot label="Block" />
        </Panel>
        <Panel $w={265}>
          <PanelBody $pad={5}>
            <Tool w={56} icon={Icons.match} label="Match" label2="Properties" />
            <Col $w={23}>
              <Row $pad={3}>{Icons.wheel}</Row>
              <Row $pad={3}>{Icons.weight}</Row>
              <Row $pad={3}>{Icons.ltype}</Row>
            </Col>
            <Col $w={178}>
              <ComboRow><Combo $w={178}><Swatch $w={16} $h={16} /><ComboText $ml={1}>ByLayer</ComboText><Push><Caret $s={4} /></Push></Combo></ComboRow>
              <ComboRow><Combo $w={178}><Rule /><ComboText $ml={-1}>ByLayer</ComboText><Push><Caret $s={4} /></Push></Combo></ComboRow>
              <ComboRow><Combo $w={178}><Rule /><ComboText $ml={-1}>ByLayer</ComboText><Push><Caret $s={4} /></Push></Combo></ComboRow>
            </Col>
          </PanelBody>
          <Foot label="Properties" launch ml={0} />
        </Panel>
        <Panel $w={69}>
          <PanelBody $pad={4}>
            <Tool w={38} icon={Icons.group} label="Group" />
            <Col $w={24}>
              <Row $center>{Icons.ungroup}</Row>
              <Row $center>{Icons.gedit}</Row>
              <HiBox>{Icons.gsel}</HiBox>
            </Col>
          </PanelBody>
          <Foot label="Groups" ml={6} />
        </Panel>
        <Panel $w={97}>
          <PanelBody $pad={11}>
            <Tool w={52} icon={Icons.measure} label="Measure" caret />
            <Col $w={22} $ml={9}>
              <Row $center>{Icons.quick}</Row>
              <Row $center>{Icons.selSim}</Row>
              <Row $center>{Icons.calc}</Row>
            </Col>
          </PanelBody>
          <Foot label="Utilities" />
        </Panel>
        <Panel $w={91}>
          <PanelBody $pad={10}>
            <Tool w={34} icon={Icons.paste} label="Paste" caret />
            <Col $w={36} $ml={10}>
              <Small icon={Icons.cut} drop gap={2} />
              <Small icon={Icons.copyc} drop gap={2} />
            </Col>
          </PanelBody>
          <PanelFoot><FootLabel $ml={7}>Clipboard</FootLabel></PanelFoot>
        </Panel>
        <Panel>
          <PanelBody $pad={10}>
            <Tool w={44} icon={Icons.base} label="Base" caret />
          </PanelBody>
          <ViewFoot>View<Caret $s={4} /><LaunchIcon /></ViewFoot>
        </Panel>
      </Ribbon>

      <FileTabs>
        <Slash $ml={12} />
        <PlainTab $ml={12}>Start</PlainTab>
        <ActiveTab $ml={7} $w={78} $pad={16}>teste*
          <S w={10}><path d="M1 1l8 8m0-8l-8 8" stroke="#9ea3aa" strokeWidth="2" /></S>
        </ActiveTab>
        <Slot $w={16} $ml={8}><S w={13}><path d="M6.500 0v13M0 6.500h13" stroke="#d8dadc" strokeWidth="2" /></S></Slot>
        <Slash $ml={11} />
      </FileTabs>
      <Strip />

      <Viewport>
        <Drawing />
        <ViewLabel>[−][Top][2D Wireframe]</ViewLabel>
        <Cube>
          <Svg width={135} height={135} viewBox="0 0 135 135" fill="none"><circle cx={66.700} cy={66} r={53} stroke="#424a54" strokeWidth="14" /></Svg>
          <CubeFace><CubeInner>TOP</CubeInner></CubeFace>
          <Dir $x={66.700} $y={10}>N</Dir>
          <Dir $x={66.700} $y={122}>S</Dir>
          <Dir $x={123} $y={66}>E</Dir>
          <Dir $x={10.700} $y={66}>W</Dir>
        </Cube>
        <WcsBtn>WCS<Svg width={8} height={5} viewBox="0 0 8 5"><path d="M0 0h8L4 5z" fill="#a8acb6" /></Svg></WcsBtn>
        <NavBar><NavIcons /></NavBar>
        <CmdWrap>
          <CmdHandle>
            <S w={18} h={6}>{[0, 1].flatMap(r => [0, 1, 2, 3, 4, 5, 6].map(c => <rect key={r + 'x' + c} x={c * 2.5} y={r * 3} width={1.6} height={2} fill="#c9cbce" />))}</S>
            <S w={12}><path d="M1 1l10 10m0-10L1 11" stroke="#c4c6c9" strokeWidth="2" /></S>
            <S w={16}><path d="M1 15l8-8a4 4 0 0 1 5-5l-2.500 2.500 1.500 1.500 2.500-2.500a4 4 0 0 1-5 5l-8 8z" fill="#b4b6b9" /></S>
          </CmdHandle>
          <CmdMain>
            <CmdHistory>Command:<br />Command:<br />Command:<br />Command:</CmdHistory>
            <CmdInput>
              <S w={16} h={12}><rect x={.5} y={.5} width={15} height={11} stroke="#55585c" /><rect x={.5} y={.5} width={15} height={2.500} fill="#55585c" /><path d="M3 5l2 2-2 2M6 9h3" stroke="#444" /></S>
              <Caret $s={3.500} $c="#55585c" />
              <CmdText>Type a command</CmdText>
              <Push><Svg width={8} height={5} viewBox="0 0 8 5"><path d="M0 5l4-5 4 5z" fill="#55585c" /></Svg></Push>
            </CmdInput>
          </CmdMain>
        </CmdWrap>
      </Viewport>
      <Strip />

      <StatusBar>
        <ModelTab>Model</ModelTab>
        <PlainTab $ml={7}>a3</PlainTab>
        <Slash $ml={11} />
        <Slot $w={14} $ml={12}><S w={13}><path d="M6.500 0v13M0 6.500h13" stroke="#d8dadc" strokeWidth="2" /></S></Slot>
        <Slash $ml={13} />
        <BarTools>
          <Seg $w={46}><Btn $w={46}>MODEL</Btn></Seg>
          <Seg $w={64}><Btn $w={22}>{St.grid}</Btn><Btn $w={26}>{St.dots}</Btn><Btn $w={16}><Caret $s={3.500} /></Btn></Seg>
          <Seg $w={101}><Btn $w={23} $on>{St.ortho}</Btn><Btn $w={24}>{St.polar}</Btn><Btn $w={18}><Caret $s={3.500} /></Btn><Btn $w={20}>{St.osnap}</Btn><Btn $w={16}><Caret $s={3.500} /></Btn></Seg>
          <Seg $w={64}><Btn $w={26}>{St.ang}</Btn><Btn $w={22} $on>{St.box}</Btn><Btn $w={16}><Caret $s={3.500} /></Btn></Seg>
          <Seg $w={24}><Btn $w={24}>{St.checker}</Btn></Seg>
          <Seg $w={106}>
            <Btn $w={24}>{St.annO}</Btn>
            <Btn $w={23}>{St.annS}</Btn>
            <Btn $w={25}>{St.ann}</Btn>
            <Btn $w={22} $fs={11.5}>1:1</Btn>
            <Btn $w={12}><Caret $s={3.500} /></Btn>
          </Seg>
          <Seg $w={40}><Btn $w={22}>{St.gear}</Btn><Btn $w={18}><Caret $s={3.500} /></Btn></Seg>
          <Seg $w={23}><Btn $w={23}>{St.plus}</Btn></Seg>
          <Seg $w={24}><Btn $w={24}>{St.shapes}</Btn></Seg>
          <Seg $w={48}><Btn $w={30}>{St.print}</Btn><Btn $w={18}>{St.check}</Btn></Seg>
          <Seg $w={47}><Btn $w={24}>{St.full}</Btn><Btn $w={23}>{St.menu}</Btn></Seg>
        </BarTools>
      </StatusBar>
    </Page>
  );
}
